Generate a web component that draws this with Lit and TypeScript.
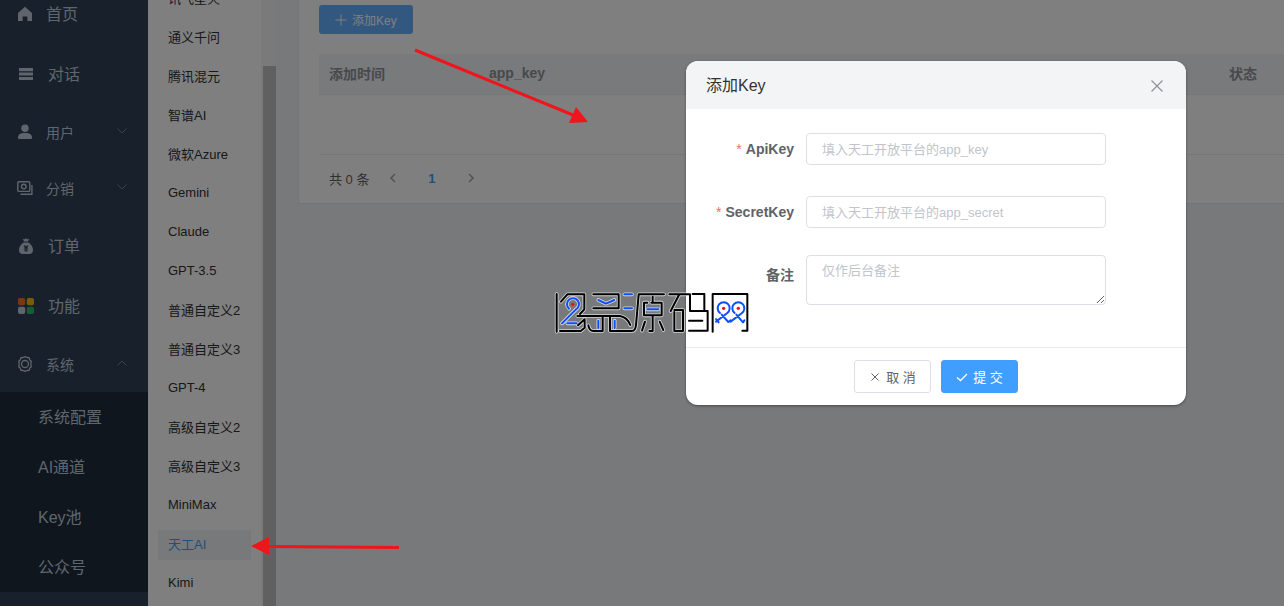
import { LitElement, html, svg, css, nothing } from "lit";
import { customElement, property } from "lit/decorators.js";
import { classMap } from "lit/directives/class-map.js";

const icons: Record<string, unknown> = {
  home: svg`<path fill="currentColor" d="M8 .8 15 7v8h-4.600v-4.500H5.600V15H1V7z"/>`,
  list: svg`<path fill="currentColor" d="M1 2h14v3.200H1zM1 6.600h14v3H1zM1 11h14v3H1z"/>`,
  user: svg`<circle cx="8" cy="4.200" r="3.700" fill="currentColor"/><path fill="currentColor" d="M1 13.500C1 10.400 3.600 9 8 9s7 1.400 7 4.500c0 1-.6 1.500-1.500 1.500h-11C1.600 15 1 14.500 1 13.500z"/>`,
  money: svg`<g fill="none" stroke="currentColor" stroke-width="1.400"><rect x=".8" y="1.800" width="12" height="9.600" rx="1"/><circle cx="6.800" cy="6.600" r="2.300"/><path d="M14.900 5v9.200H3.500"/></g>`,
  bag: svg`<path fill="currentColor" d="m8 0 1 1.300 2.200-.4-1.200 2.500H6L4.800.9 7 1.300zM5.600 4.400h4.800C13 6 15 9 15 12c0 2.500-1.300 4-3.800 4H4.800C2.300 16 1 14.500 1 12c0-3 2-6 4.600-7.600z"/><path stroke="#304156" fill="none" stroke-width="1.200" d="m6 7.500 2 2 2-2M5.900 10h4.200M5.900 12h4.200M8 9.500v4.500"/>`,
  apps: svg`<rect width="7.200" height="7.200" rx="2" fill="#fb6d20"/><rect x="8.800" width="7.200" height="7.200" rx="2" fill="#f0b913"/><rect y="8.800" width="7.200" height="7.200" rx="2" fill="#bfcbd9"/><rect x="8.800" y="8.800" width="7.200" height="7.200" rx="2" fill="#34b76e"/>`,
  gear: svg`<g fill="none" stroke="currentColor" stroke-width="1.300" stroke-linejoin="round"><path d="M6.200 1.500 8 .7l1.800.8 2.300.2.700 2.200 1.500 1.300-.5 2.800.5 2.800-1.500 1.300-.7 2.200-2.300.2-1.800.8-1.800-.8-2.300-.2-.7-2.200-1.500-1.300.5-2.800-.5-2.800 1.500-1.300.7-2.200z"/><circle cx="8" cy="8" r="3.500"/></g>`,
};

const menu = [
  { icon: "home", label: "首页" },
  { icon: "list", label: "对话" },
  { icon: "user", label: "用户", group: "closed" },
  { icon: "money", label: "分销", group: "closed" },
  { icon: "bag", label: "订单" },
  { icon: "apps", label: "功能" },
  { icon: "gear", label: "系统", group: "open", children: ["系统配置", "AI通道", "Key池", "公众号"] },
];

const channels = [
  "讯飞星火", "通义千问", "腾讯混元", "智谱AI", "微软Azure", "Gemini", "Claude", "GPT-3.5",
  "普通自定义2", "普通自定义3", "GPT-4", "高级自定义2", "高级自定义3", "MiniMax", "天工AI", "Kimi",
];

@customElement("side-menu")
class SideMenu extends LitElement {
  static styles = css`
    :host { display: block; flex: none; width: 148px; background: #304156; color: #bfcbd9; overflow: hidden; }
    .nav { margin-top: -16px; }
    a { color: inherit; text-decoration: none; box-sizing: border-box; }
    .item { display: flex; align-items: center; height: 60px; padding: 0 21px 0 18px; font-size: 16px; gap: 14px; }
    .item span { padding-bottom: 3px; }
    .group { height: 56px; font-size: 14px; padding-left: 17px; gap: 13px; }
    .group span { padding-bottom: 0; }
    .home { padding-left: 17px; gap: 13px; }
    .icon { width: 16px; height: 16px; flex: none; }
    .arrow { width: 10px; height: 6px; margin: 0 0 2px auto; fill: none; stroke: #909399; stroke-opacity: 0.8; }
    .sub { background: #1f2d3d; }
    .child { display: flex; align-items: center; height: 50px; padding: 0 0 3px 38px; font-size: 16px; }
  `;
  render() {
    return html`<nav class="nav">
      ${menu.map((m) => html`
        <a href="#" class=${classMap({ item: true, group: !!m.group, home: m.icon === "home" })}>
          <svg class="icon" viewBox="0 0 16 16">${icons[m.icon]}</svg>
          <span>${m.label}</span>
          ${m.group
            ? html`<svg class="arrow" viewBox="0 0 10 6"><path d=${m.group === "open" ? "M.5 5.500 5 1l4.500 4.500" : "M.5.5 5 5 9.500.5"} /></svg>`
            : nothing}
        </a>
        ${m.children ? html`<div class="sub">${m.children.map((c) => html`<a href="#" class="child">${c}</a>`)}</div>` : nothing}
      `)}
    </nav>`;
  }
}

@customElement("channel-list")
class ChannelList extends LitElement {
  @property() active = "";
  static styles = css`
    :host { display: flex; flex: none; width: 128px; background: #fff; overflow: hidden; }
    .list { flex: 1; display: flex; flex-direction: column; gap: 9px; margin-top: -16px; padding: 0 10px; }
    .entry { display: flex; align-items: center; flex: none; box-sizing: border-box; height: 30px; padding: 0 10px 3px; font-size: 13px; color: #303133; text-decoration: none; white-space: nowrap; }
    .active { background: #f0f2f5; color: #409eff; }
    .track { width: 13px; padding: 66px 0 0 2px; background: #f5f5f5; display: flex; }
    .thumb { flex: 1; background: #c1c1c1; }
  `;
  render() {
    return html`
      <nav class="list">
        ${channels.map((c) => html`<a href="#" class=${classMap({ entry: true, active: c === this.active })}>${c}</a>`)}
      </nav>
      <div class="track"><div class="thumb"></div></div>`;
  }
}

@customElement("key-panel")
class KeyPanel extends LitElement {
  static styles = css`
    :host { display: block; flex: 1; min-width: 0; background: #f0f2f5; padding-left: 22px; overflow: hidden; }
    .card { background: #fff; border: 1px solid #e6ebf5; border-width: 0 0 1px 1px; padding: 5px 0 0 20px; }
    .add { display: flex; align-items: center; gap: 5px; height: 29px; padding: 0 16px; border: 0; border-radius: 3px; background: #66b1ff; color: #fff; font: inherit; font-size: 12px; }
    .add svg { width: 12px; height: 12px; stroke: #fff; }
    table { width: 100%; margin-top: 20px; border-collapse: collapse; table-layout: fixed; font-size: 14px; }
    th { height: 38px; padding: 0 10px 2px; text-align: left; background: #f3f4f7; color: #909399; border-bottom: 1px solid #ebeef5; }
    td { height: 59px; padding: 0; border-bottom: 1px solid #ebeef5; }
    .time { width: 140px; }
    .state { width: 45px; }
    .pager { display: flex; align-items: center; box-sizing: border-box; height: 48px; padding: 0 0 2px 10px; font-size: 13px; color: #606266; }
    .pager button { display: flex; align-items: center; justify-content: center; width: 39px; height: 28px; padding: 0; border: 0; background: none; font: inherit; font-weight: bold; color: #409eff; }
    .pager span { margin-right: 4px; }
    .pager svg { width: 8px; height: 10px; fill: none; stroke: #a0a4ad; stroke-width: 1.500; }
  `;
  render() {
    return html`<section class="card">
      <button class="add"><svg viewBox="0 0 12 12"><path d="M6 .5v11M.5 6h11" /></svg>添加Key</button>
      <table>
        <thead><tr><th class="time">添加时间</th><th>app_key</th><th class="state">状态</th></tr></thead>
        <tbody><tr><td colspan="3"></td></tr></tbody>
      </table>
      <div class="pager">
        <span>共 0 条</span>
        <button aria-label="上一页"><svg viewBox="0 0 8 10"><path d="M6 1 2 5l4 4" /></svg></button>
        <button>1</button>
        <button aria-label="下一页"><svg viewBox="0 0 8 10"><path d="m2 1 4 4-4 4" /></svg></button>
      </div>
    </section>`;
  }
}

@customElement("key-dialog")
class KeyDialog extends LitElement {
  static styles = css`
    :host { display: block; width: 500px; background: #fff; border-radius: 12px; overflow: hidden; box-shadow: 0 1px 3px rgba(0, 0, 0, 0.4); }
    header { display: flex; align-items: center; justify-content: space-between; height: 48px; padding: 0 22px 0 20px; background: #f3f4f6; }
    h2 { margin: 0; padding-bottom: 3px; font-size: 16px; font-weight: normal; color: #303133; }
    button { font: inherit; }
    .close { display: flex; padding: 2px 0 0; border: 0; background: none; }
    .close svg { width: 14px; height: 14px; stroke: #909399; stroke-width: 1.300; }
    form { padding: 20px 80px 19px 0; }
    .row { display: flex; margin-bottom: 23px; min-height: 40px; align-items: center; }
    .tall { align-items: flex-start; }
    label { width: 108px; flex: none; margin-right: 12px; line-height: 40px; text-align: right; font-size: 14px; font-weight: bold; color: #606266; }
    .star { margin-right: 4px; color: #f56c6c; font-weight: normal; }
    input, textarea { flex: 1; min-width: 0; box-sizing: border-box; border: 1px solid #dcdfe6; border-radius: 4px; background: #fff; font: inherit; font-size: 13px; padding: 0 15px; color: #606266; outline: 0; }
    input { height: 32px; }
    textarea { height: 50px; padding-top: 5px; line-height: 20px; resize: vertical; }
    ::placeholder { color: #c0c4cc; opacity: 1; }
    footer { display: flex; justify-content: center; gap: 10px; padding: 12px; border-top: 1px solid #e8eaec; }
    .btn { display: flex; align-items: center; justify-content: center; gap: 5px; box-sizing: border-box; width: 77px; height: 33px; padding: 0; border: 1px solid #dcdfe6; border-radius: 3px; background: #fff; color: #606266; font-size: 13px; }
    .btn svg { width: 12px; height: 12px; fill: none; stroke: currentColor; }
    .primary { border-color: #409eff; background: #409eff; color: #fff; }
  `;
  render() {
    return html`
      <header>
        <h2>添加Key</h2>
        <button class="close" aria-label="关闭"><svg viewBox="0 0 14 14"><path d="m1.500 1.500 11 11m0-11-11 11" /></svg></button>
      </header>
      <form>
        <div class="row"><label for="api"><span class="star">*</span>ApiKey</label><input id="api" placeholder="填入天工开放平台的app_key" /></div>
        <div class="row"><label for="secret"><span class="star">*</span>SecretKey</label><input id="secret" placeholder="填入天工开放平台的app_secret" /></div>
        <div class="row tall"><label for="note">备注</label><textarea id="note" placeholder="仅作后台备注"></textarea></div>
      </form>
      <footer>
        <button class="btn"><svg viewBox="0 0 12 12"><path d="m2.500 2.500 7 7m0-7-7 7" /></svg>取 消</button>
        <button class="btn primary"><svg viewBox="0 0 12 12"><path stroke-width="1.300" d="m1 6.500 3.500 3L11 3" /></svg>提 交</button>
      </footer>`;
  }
}

const blackStrokes =
  "M50 42V155M63 65 82 43H133V88L120 102M60 153H122L134 143V118L114 136M112 108H240Q262 112 271 135" +
  "M160 43H236V85H160M145 136Q148 153 160 153H188V108M210 108V153H276Q286 153 288 135L296 43H372" +
  "M338 50V65M322 68H312V106H365V68H334M338 108V153H328M315 125 306 152M359 125 370 150" +
  "M388 43H450V93H503V152H447M418 43 392 93M403 96V153H429V90H403M458 42H493V93M447 122H487" +
  "M518 155V42H622V152H607";
const blueStrokes =
  "M66 130 108 88A18 18 0 1 0 87 86M82 130H110M175 60 198 71 223 60M175 122V144M224 122V144M253 43H276M253 85H276M322 88H355" +
  "M528 125 562 99A18 18 0 1 0 540 99M528 117 536 127M545 104 565 126 572 121" +
  "M572 125 606 99A18 18 0 1 0 584 99M589 104 609 127 613 121";

@customElement("app-root")
class AppRoot extends LitElement {
  static styles = css`
    :host { display: block; position: relative; height: 100vh; overflow: hidden; font-family: "Liberation Sans", "Noto Sans CJK SC", sans-serif; }
    .page { display: flex; height: 100%; }
    .mask { position: absolute; inset: 0; background: rgba(0, 0, 0, 0.5); }
    .dialog { position: absolute; top: 61px; left: 686px; }
    .mark { position: absolute; left: 540px; top: 280px; width: 220px; height: 65px; pointer-events: none; }
    .notes { position: absolute; left: 0; top: 0; width: 600px; height: 600px; pointer-events: none; }
  `;
  render() {
    return html`
      <div class="page">
        <side-menu></side-menu>
        <channel-list active="天工AI"></channel-list>
        <key-panel></key-panel>
      </div>
      <div class="mask"></div>
      <key-dialog class="dialog" role="dialog"></key-dialog>
      <svg class="mark" viewBox="0 0 660 195" fill="none" stroke-linecap="round" stroke-linejoin="round">
        <path d=${blackStrokes + blueStrokes} stroke="#fff" stroke-opacity=".7" stroke-width="11" />
        <path d=${blackStrokes} stroke="#000" stroke-width="6" />
        <path d=${blueStrokes} stroke="#0a50ff" stroke-width="6" />
        <g fill="#e8101c"><circle cx="98" cy="73" r="5" /><circle cx="551" cy="85" r="5" /><circle cx="595" cy="85" r="5" /></g>
      </svg>
      <svg class="notes" viewBox="0 0 600 600" stroke="#f0141c" stroke-width="3" fill="none">
        <path d="M415 50 573 115M399 547.500 268 546.500" />
        <path stroke="none" fill="#f0141c" d="M588 122 576 107 569 123zM251 546 269 537V555z" />
      </svg>`;
  }
}
